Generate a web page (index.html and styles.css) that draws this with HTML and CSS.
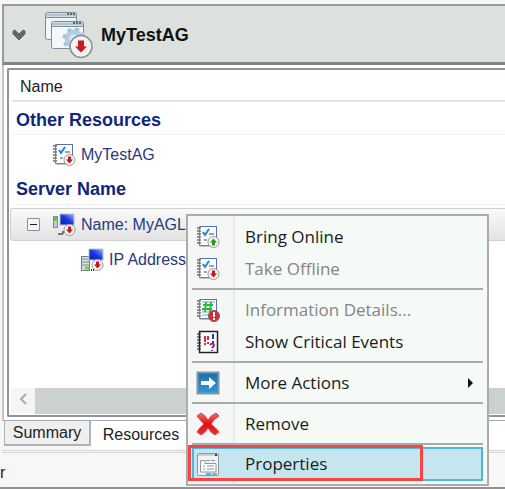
FILE: index.html
```
<!DOCTYPE html>
<html lang="en">
<head>
<meta charset="utf-8">
<title>MyTestAG</title>
<link rel="stylesheet" href="styles.css">
</head>
<body>
<svg class="defs" aria-hidden="true">
  <defs>
    <linearGradient id="blue" x1="0" y1="0" x2="0" y2="1"><stop offset="0" stop-color="#1c6cae"/><stop offset="1" stop-color="#2e9bd4"/></linearGradient>
    <linearGradient id="screen" x1="0" y1="1" x2="1" y2="0"><stop offset="0" stop-color="#0a1ba8"/><stop offset=".5" stop-color="#1a35e0"/><stop offset="1" stop-color="#9db4ff"/></linearGradient>
    <linearGradient id="cross" x1="0" y1="0" x2="0" y2="1"><stop offset="0" stop-color="#f07070"/><stop offset=".5" stop-color="#e01010"/><stop offset="1" stop-color="#ee3030"/></linearGradient>
    <g id="notebook">
      <rect x="3.500" y="1.500" width="17" height="19" fill="#fafcff" stroke="#5a70b0"/>
      <path d="M3.500 1v20H20" fill="none" stroke="#8a8f98"/>
      <path d="M1 3h4M1 6h4M1 9h4M1 12h4M1 15h4M1 18h4" stroke="#6d7074" stroke-width="1.500"/>
    </g>
    <g id="checks">
      <path d="M7 7l2 3 4-6" fill="none" stroke="#168bd0" stroke-width="2"/>
      <path d="M13 9h5M8 15h3" stroke="#9aa4b5" stroke-width="2"/>
    </g>
    <g id="down">
      <circle cx="17.500" cy="17" r="5.500" fill="#f5f5f5" stroke="#9a9a9a"/>
      <path d="M16 13.500h3v3h2l-3.500 4-3.500-4h2z" fill="#d4141c"/>
    </g>
  </defs>
</svg>
<header class="group-header">
  <svg class="chevron" viewBox="0 0 16 12"><path d="M2 2l2-1 4 4 4-4 2 1v3l-6 6-6-6z" fill="#666" stroke="#666" stroke-linejoin="round"/></svg>
  <svg class="group-icon" viewBox="0 0 50 48">
    <rect x="1.500" y="1.500" width="31" height="27" rx="2" fill="#f3f6f7" stroke="#858b90"/>
    <path d="M2 4h30" stroke="#b0c4d8" stroke-width="3"/><path d="M23 3h8" stroke="#5a6878" stroke-width="2" stroke-dasharray="2 1"/><path d="M2 6.500h30" stroke="#7690a8"/>
    <rect x="7.500" y="10.500" width="32" height="27" rx="2" fill="#f5f8f9" stroke="#858b90"/>
    <path d="M8 13h31" stroke="#b0c4d8" stroke-width="3"/><path d="M29 12h8" stroke="#5a6878" stroke-width="2" stroke-dasharray="2 1"/><path d="M8 15.500h31" stroke="#7690a8"/>
    <circle cx="30" cy="28" r="7" fill="#dceaf5" stroke="#b3cde4" stroke-width="5"/>
    <circle cx="30" cy="28" r="10" fill="none" stroke="#a3c1dc" stroke-width="3" stroke-dasharray="4 4"/>
    <circle cx="37" cy="35.500" r="11" fill="#f3f3f3" stroke="#8f8f8f" stroke-width="1.500"/>
    <path d="M34 29.500h6v6h3l-6 6-6-6h3z" fill="#d01820"/>
  </svg>
  <h1>MyTestAG</h1>
</header>
<main class="panel">
  <section class="list">
    <div class="column-head">Name</div>
    <h2>Other Resources</h2>
    <div class="row leaf">
      <svg class="icon" viewBox="0 0 24 24"><use href="#notebook"/><use href="#checks"/><use href="#down"/></svg>
      <span>MyTestAG</span>
    </div>
    <h2 class="second">Server Name</h2>
    <div class="row selected">
      <button class="toggle" aria-label="Collapse"></button>
      <svg class="icon" viewBox="0 0 24 24">
        <rect x="1.500" y="3.500" width="4" height="11" fill="#c8ccc8" stroke="#888"/><path d="M2 6h3" stroke="#42c23a" stroke-width="3"/>
        <rect x="8" y="1" width="14" height="11" fill="url(#screen)" stroke="#b8bfd0"/><path d="M12 15h6M6 21h5M11 18v3" stroke="#555" stroke-width="1.500"/><use href="#down"/>
      </svg>
      <span>Name: MyAGListener</span>
    </div>
    <div class="row child">
      <svg class="icon" viewBox="0 0 24 24">
        <rect x="1.500" y="8.500" width="8" height="14" fill="#d5dbe0" stroke="#747c82"/><path d="M2 11h7M2 14h7M2 17h7" stroke="#899197"/><path d="M5 20h4" stroke="#60df35" stroke-width="3"/>
        <rect x="9" y="1" width="14" height="11" fill="url(#screen)" stroke="#b8bfd0"/><path d="M11 22h4" stroke="#333" stroke-width="2" stroke-dasharray="1 1"/><use href="#down"/>
      </svg>
      <span>IP Address</span>
    </div>
    <div class="scrollbar">
      <button aria-label="Scroll left"><svg viewBox="0 0 10 14"><path d="M8 2L3 7l5 5" fill="none" stroke="#aaa" stroke-width="2"/></svg></button>
      <div class="thumb"></div>
    </div>
  </section>
</main>
<nav class="tabs">
  <button class="tab">Summary</button>
  <button class="tab active">Resources</button>
  <span class="tab-rest"></span>
</nav>
<footer class="status">r</footer>
<div class="menu" role="menu">
  <button class="item" role="menuitem"><svg class="icon" viewBox="0 0 24 24"><use href="#notebook"/><use href="#checks"/><circle cx="17.500" cy="17" r="5.500" fill="#f5f5f5" stroke="#9a9a9a"/><path d="M16 20.500h3v-3h2l-3.500-4-3.500 4h2z" fill="#279b15"/></svg>Bring Online</button>
  <button class="item" role="menuitem" disabled><svg class="icon" viewBox="0 0 24 24"><use href="#notebook"/><use href="#checks"/><use href="#down"/></svg>Take Offline</button>
  <hr>
  <button class="item" role="menuitem" disabled><svg class="icon" viewBox="0 0 24 24"><use href="#notebook"/><path d="M6 4h13M6 14h9M6 17h7" stroke="#7e9dcb"/><path d="M7 7h10M6 11h10M10 4l-1 10M15 4l-1 10" stroke="#25bd32" stroke-width="2"/><circle cx="18" cy="18" r="5.500" fill="#cf3038" stroke="#a8494d"/><path d="M18 14v5M18 20v2" stroke="#fff" stroke-width="2"/></svg>Information Details...</button>
  <button class="item" role="menuitem"><svg class="icon" viewBox="0 0 24 24"><rect x="3.500" y="1.500" width="18" height="21" fill="#fff" stroke="#222" stroke-width="1.500"/><path d="M1 4h4M1 7h4M1 10h4M1 13h4M1 16h4M1 19h4" stroke="#222"/><path d="M9 6v6M9 13v2M12 6v4M12 12v2" stroke="#ee2430" stroke-width="2"/><path d="M17 4v5M17 11v2" stroke="#2333e0" stroke-width="2"/><path d="M14 15q3-3 4 0 0 1-2 3M16 20v1" fill="none" stroke="#912095" stroke-width="2"/></svg>Show Critical Events</button>
  <hr>
  <button class="item" role="menuitem"><svg class="icon" viewBox="0 0 24 24"><rect x="1.500" y="1.500" width="21" height="21" fill="url(#blue)" stroke="#80979f" stroke-width="2"/><path d="M5 10h8V6l7 6-7 6v-4H5z" fill="#fff"/></svg>More Actions<svg class="arrow" viewBox="0 0 7 12"><path d="M1 1l5 5-5 5z" fill="#111"/></svg></button>
  <hr>
  <button class="item" role="menuitem"><svg class="icon" viewBox="0 0 24 24"><path d="M1 4l4-3q4 2 7 7 3-5 8-7l3 3q-5 3-8 8 5 4 8 8l-4 3q-4-2-7-7-3 5-7 7l-4-3q3-5 7-8-4-4-7-8z" fill="url(#cross)" stroke="#dc4545"/></svg>Remove</button>
  <hr>
  <button class="item current" role="menuitem"><svg class="icon" viewBox="0 0 24 24"><rect x="1.500" y="1.500" width="21" height="22" rx="1" fill="#f0f2f3" stroke="#8d989d"/><path d="M2 3h20" stroke="#c9d0d4" stroke-width="2"/><path d="M19 3h2" stroke="#344" stroke-width="2"/><path d="M4.500 20V8.500H9v3h11V20z" fill="#fff" stroke="#8f999e"/><path d="M10 8.500h4M15 8.500h4M7 14h2M11 14h7M7 17h2M11 17h7" stroke="#8b959a"/><path d="M10 22h5" stroke="#2bcaf0" stroke-width="2"/><path d="M16 22h5" stroke="#a3b0b6" stroke-width="2"/></svg>Properties<span class="callout"></span></button>
</div>
</body>
</html>
```

FILE: styles.css
```
* { box-sizing: border-box; }
body {
  margin: 0;
  min-height: 100vh;
  padding: 4px 0 0 2px;
  display: flex;
  flex-direction: column;
  overflow: hidden;
  position: relative;
  background: #f7f7f7;
  color: #222;
  font: 16px/20px "Liberation Sans", Arial, sans-serif;
}
button { font: inherit; color: inherit; margin: 0; padding: 0; border: 0; background: none; }
h1, h2 { margin: 0; font-size: 18px; line-height: 20px; }
.defs { position: absolute; width: 0; height: 0; }
.group-header {
  display: flex;
  align-items: center;
  height: 61px;
  padding: 2px 0 0 7px;
  border: 2px solid #999c9b;
  border-right: 0;
  border-bottom: 3px solid #7f8582;
  background: #dde1de;
  color: #111;
}
.chevron { width: 16px; height: 12px; margin-right: 17px; }
.group-icon { width: 50px; height: 48px; margin-right: 7px; }
.panel {
  padding: 3px 0 3px 3px;
  border-left: 2px solid #c4c4c4;
  border-bottom: 1px solid #a8a8a8;
  background: #fff;
}
.list {
  display: flex;
  flex-direction: column;
  height: 349px;
  padding-left: 3px;
  border: 2px solid #8f929f;
  border-right: 0;
  border-radius: 2px 0 0 2px;
  background: #fff;
}
.column-head { height: 32px; padding: 7px 8px 0; border-bottom: 2px solid #dfe5e2; }
.list h2 { height: 33px; padding: 8px 4px 0; border-bottom: 1px solid #f2f2f2; color: #10277c; }
.list h2.second { height: 32px; padding-top: 6px; margin-bottom: 3px; }
.row { display: flex; align-items: center; color: #27397e; white-space: nowrap; }
.icon { width: 24px; height: 24px; flex: none; }
.row .icon { width: 24px; height: 24px; margin-right: 5px; }
.leaf { height: 38px; padding: 2px 0 0 40px; }
.selected {
  height: 33px;
  margin-left: -2px;
  padding-left: 16px;
  border: 1px solid #ccd1ce;
  border-right: 0;
  border-radius: 3px 0 0 3px;
  background: linear-gradient(#f8f9f8, #e3e3e3);
}
.selected .icon { margin-left: 12px; }
.toggle { width: 13px; height: 13px; border: 1px solid #7894a5; border-radius: 1px; background: linear-gradient(#222, #222) center / 7px 1px no-repeat #f5f5f5; }
.child { height: 38px; padding-left: 68px; }
.scrollbar { display: flex; height: 26px; margin-top: auto; margin-bottom: 1px; margin-left: -1px; background: #f5f5f5; }
.scrollbar button { width: 24px; }
.scrollbar svg { width: 10px; height: 14px; }
.thumb { flex: 1; background: #cdd1ce; }
.tabs { display: flex; height: 32px; padding-left: 2px; align-items: flex-start; background: #f7f7f7; border-bottom: 3px double #d5d5d5; }
.tab { width: 87px; height: 25px; border: 1px solid #aeb2b0; border-top: 0; border-right-width: 2px; border-bottom-width: 2px; background: #edf0ee; }
.tab.active { width: 96px; height: 28px; padding: 0 0 0 4px; border: 0; background: #fff; }
.tab-rest { flex: 1; height: 28px; background: #fff; }
.status { flex: 1; border-bottom: 2px solid #929292; padding: 10px 0 0; margin-left: -2px; }
.menu {
  position: absolute;
  left: 186px;
  top: 214px;
  width: 303px;
  padding: 5px 4px 3px;
  border: 2px solid #a9aeac;
  background: linear-gradient(90deg, #f5f6f6 45px, #e6e9e8 45px, #e6e9e8 47px, #f5faf7 47px);
  color: #1b1b1b;
  font: 17px/24px "Open Sans", "Noto Sans", sans-serif;
}
.item { position: relative; display: flex; align-items: center; width: 100%; height: 32px; padding-left: 4px; text-align: left; white-space: nowrap; }
.item:disabled { color: #858585; }
.item .icon { margin-right: 25px; }
.menu hr { height: 2px; margin: 3px 0 4px; border: 0; background: #a8acaa; }
.item .arrow { width: 7px; height: 12px; margin-left: auto; margin-right: 9px; }
.menu hr:last-of-type { margin-bottom: 2px; }
.item.current { height: 34px; background: #c5e6ef; box-shadow: inset 0 0 0 2px #4db6e0; }
.callout { position: absolute; left: -4px; top: -2px; width: 235px; height: 36px; border: 3px solid #fb4343; }
```
